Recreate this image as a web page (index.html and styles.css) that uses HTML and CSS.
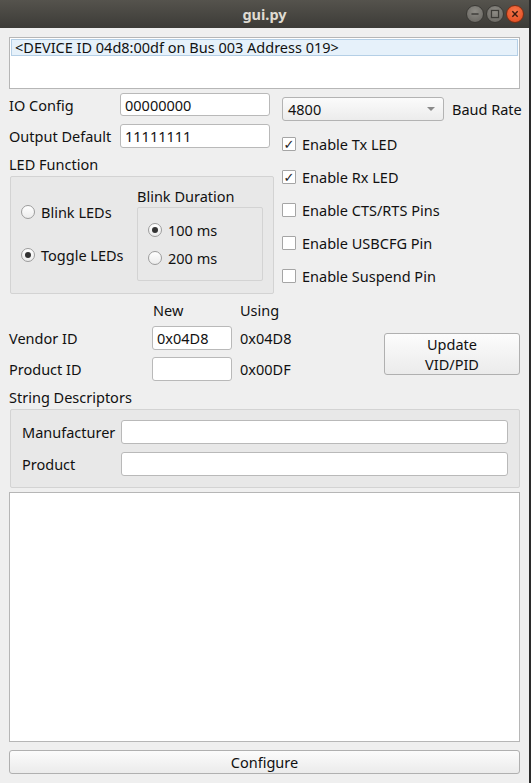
FILE: index.html
```html
<!DOCTYPE html>
<html>
<head>
<meta charset="utf-8">
<link rel="stylesheet" href="styles.css">
</head>
<body>
<div class="screen">
  <div class="window">
    <div class="titlebar">
      <span class="title">gui.py</span>
      <div class="wbtns">
        <span class="wbtn min"><svg width="18" height="18" viewBox="0 0 18 18"><line x1="5" y1="9" x2="13" y2="9" stroke="#3c3b37" stroke-width="1.6"/></svg></span>
        <span class="wbtn max"><svg width="18" height="18" viewBox="0 0 18 18"><rect x="5" y="5" width="8" height="8" fill="none" stroke="#3c3b37" stroke-width="1.4"/></svg></span>
        <span class="wbtn close"><svg width="18" height="18" viewBox="0 0 18 18"><path d="M6 6 L12 12 M12 6 L6 12" stroke="#3a1a10" stroke-width="1.6"/></svg></span>
      </div>
    </div>
    <div class="content">
      <div class="listbox">
        <div class="list-item">&lt;DEVICE ID 04d8:00df on Bus 003 Address 019&gt;</div>
      </div>

      <div class="config">
        <div class="left">
          <div class="frow r1"><span class="flabel">IO Config</span><div class="input w154">00000000</div></div>
          <div class="frow r2"><span class="flabel">Output Default</span><div class="input w154">11111111</div></div>
          <div class="sect-label">LED Function</div>
          <div class="group led">
            <div class="radio-col">
              <div class="radio"><span class="rbox"></span><span>Blink LEDs</span></div>
              <div class="radio"><span class="rbox on"></span><span>Toggle LEDs</span></div>
            </div>
            <div class="blink">
              <div class="sublabel">Blink Duration</div>
              <div class="group inner">
                <div class="radio"><span class="rbox on"></span><span>100 ms</span></div>
                <div class="radio"><span class="rbox"></span><span>200 ms</span></div>
              </div>
            </div>
          </div>
        </div>
        <div class="right">
          <div class="combo-row">
            <div class="combo"><span>4800</span><span class="arrow"></span></div>
            <span class="combo-label">Baud Rate</span>
          </div>
          <div class="check"><span class="cbox">✓</span><span>Enable Tx LED</span></div>
          <div class="check"><span class="cbox">✓</span><span>Enable Rx LED</span></div>
          <div class="check"><span class="cbox"></span><span>Enable CTS/RTS Pins</span></div>
          <div class="check"><span class="cbox"></span><span>Enable USBCFG Pin</span></div>
          <div class="check"><span class="cbox"></span><span>Enable Suspend Pin</span></div>
        </div>
      </div>

      <div class="vid">
        <span class="hdr c2">New</span>
        <span class="hdr c3">Using</span>
        <span class="vlabel">Vendor ID</span>
        <div class="input vin">0x04D8</div>
        <span class="using">0x04D8</span>
        <div class="button update"><span class="bl">Update</span><span class="bl">VID/PID</span></div>
        <span class="vlabel">Product ID</span>
        <div class="input vin"></div>
        <span class="using">0x00DF</span>
      </div>

      <div class="sect-label sd">String Descriptors</div>
      <div class="group strings">
        <div class="srow"><span class="slabel">Manufacturer</span><div class="input sin"></div></div>
        <div class="srow"><span class="slabel">Product</span><div class="input sin"></div></div>
      </div>

      <div class="textbox"></div>
      <div class="button configure">Configure</div>
    </div>
  </div>
  <div class="edge"></div>
</div>
</body>
</html>
```

FILE: styles.css
```css
* { box-sizing: border-box; }
html, body { margin: 0; padding: 0; }
body {
  width: 531px;
  height: 783px;
  overflow: hidden;
  font-family: "Noto Sans", "DejaVu Sans", sans-serif;
  font-size: 14.5px;
  color: #111;
}
.screen { display: flex; width: 531px; height: 783px; }
.window { width: 529px; height: 783px; background: #efefef; display: flex; flex-direction: column; }
.edge { width: 2px; background: #2b2b2b; }

.titlebar {
  height: 29px;
  background: linear-gradient(#55534d, #3c3b37);
  position: relative;
  display: flex;
  align-items: center;
  justify-content: center;
}
.title { color: #dfdbd2; font-weight: bold; font-size: 14.5px; }
.wbtns { position: absolute; right: 5px; top: 5px; display: flex; gap: 2px; }
.wbtn {
  width: 18px; height: 18px; border-radius: 50%;
  display: flex; align-items: center; justify-content: center;
  background: radial-gradient(circle at 50% 35%, #8e8c86, #64625d);
  border: 1px solid #3a3935;
}
.wbtn svg { display: block; }
.wbtn.close { background: radial-gradient(circle at 50% 35%, #f6774b, #e0471c); border-color: #7a2d14; }

.content { padding: 9px; display: flex; flex-direction: column; flex: 1; }

.listbox {
  height: 52px;
  background: #fff;
  border: 1px solid #b6b6b6;
  padding: 1px;
}
.list-item {
  height: 17px;
  line-height: 15px;
  background: #e6f1fa;
  border: 1px solid #b4cfe6;
  padding-left: 3px;
  white-space: nowrap;
}

.input {
  background: #fff;
  border: 1px solid #b9b9b9;
  border-radius: 3px;
  height: 24px;
  line-height: 22px;
  padding-left: 4px;
}

.config { display: flex; }
.left { width: 265px; flex: none; display: flex; flex-direction: column; }
.frow { display: flex; align-items: center; }
.frow.r1 { margin-top: 4px; height: 23px; }
.frow.r2 { margin-top: 8px; height: 24px; }
.flabel { width: 111px; white-space: nowrap; }
.frow .input { width: 150px; height: 100%; }
.sect-label { height: 17px; line-height: 17px; margin-top: 8px; white-space: nowrap; }

.group {
  background: #e8e8e8;
  border: 1px solid #d3d3d3;
  border-radius: 2px;
}
.group.led { margin: 3px 0 0 1px; height: 118px; width: 264px; display: flex; }
.radio-col { width: 126px; padding: 25px 0 0 10px; display: flex; flex-direction: column; gap: 23px; }
.radio { display: flex; align-items: center; height: 20px; white-space: nowrap; }
.rbox {
  width: 14px; height: 14px; border-radius: 50%;
  border: 1px solid #9c9c9c;
  background: linear-gradient(#ffffff, #ececec);
  margin-right: 6px;
  flex: none;
  display: flex; align-items: center; justify-content: center;
}
.rbox.on::after { content: ""; width: 6px; height: 6px; border-radius: 50%; background: #333; }
.blink { display: flex; flex-direction: column; padding-top: 11px; }
.sublabel { height: 17px; line-height: 17px; white-space: nowrap; }
.group.inner { margin-top: 2px; width: 126px; height: 74px; padding: 12px 0 0 10px; display: flex; flex-direction: column; gap: 8px; }

.right { margin-left: 8px; flex: 1; display: flex; flex-direction: column; }
.combo-row { display: flex; align-items: center; margin-top: 8px; height: 24px; white-space: nowrap; }
.combo {
  width: 162px; height: 24px; flex: none;
  border: 1px solid #b3b3b3; border-radius: 3px;
  background: linear-gradient(#fbfbfb, #ececec);
  display: flex; align-items: center; justify-content: space-between;
  padding: 0 6px 0 5px;
}
.arrow { width: 0; height: 0; border-left: 4px solid transparent; border-right: 4px solid transparent; border-top: 4px solid #8a8a8a; margin-right: 2px; }
.combo-label { margin-left: 8px; white-space: nowrap; }
.check { display: flex; align-items: center; height: 20px; margin-top: 13px; white-space: nowrap; }
.cbox {
  width: 14px; height: 14px; flex: none;
  border: 1px solid #a5a5a5; border-radius: 1px;
  background: #fff;
  margin-right: 6px;
  font-size: 13px; line-height: 12px; text-align: center; font-weight: bold; color: #222;
}

.vid {
  display: grid;
  grid-template-columns: 143px 80px 1fr 136px;
  grid-template-rows: 18px 24px 24px;
  row-gap: 7px;
  margin-top: 7px;
  align-items: center;
}
.vid .hdr { line-height: 18px; }
.hdr.c2 { grid-column: 2; padding-left: 1px; }
.hdr.c3 { grid-column: 3; padding-left: 8px; }
.using { padding-left: 8px; }
.vid .vlabel { grid-column: 1; }
.button {
  border: 1px solid #b0b0b0; border-radius: 3px;
  background: linear-gradient(#fcfcfc, #ebebeb);
  text-align: center;
}
.update {
  grid-column: 4; grid-row: 2 / span 2;
  height: 42px; align-self: center; margin-top: 1px;
  display: flex; flex-direction: column; justify-content: center; align-items: center;
}
.update .bl { line-height: 20px; height: 20px; display: block; }

.sect-label.sd { margin-top: 8px; }
.group.strings { margin: 3px 0 0 1px; height: 79px; padding: 10px 11px 0 11px; display: flex; flex-direction: column; gap: 8px; }
.srow { display: flex; align-items: center; height: 24px; }
.slabel { width: 99px; }
.input.sin { flex: 1; height: 24px; }

.textbox { margin-top: 4px; height: 250px; background: #fff; border: 1px solid #b6b6b6; }
.configure { margin-top: 8px; height: 24px; line-height: 22px; }
```
